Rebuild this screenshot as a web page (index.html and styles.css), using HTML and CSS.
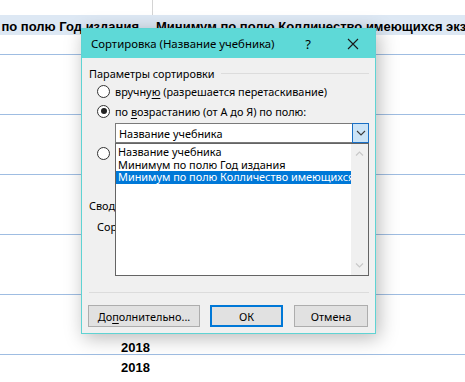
FILE: index.html
```html
<!DOCTYPE html>
<html>
<head>
<meta charset="utf-8">
<link rel="stylesheet" href="styles.css">
</head>
<body>
<div class="sheet">
  <div class="row r-top"><div class="cell c1"></div><div class="cell c2"></div></div>
  <div class="row r-head">
    <div class="cell c1 bold right">Минимум по полю Год издания</div>
    <div class="cell c2 bold">Минимум по полю Колличество имеющихся экземпляров</div>
  </div>
  <div class="row r-20 line"></div>
  <div class="row r-60 line"></div>
  <div class="row r-60 line"></div>
  <div class="row r-60 line"></div>
  <div class="row r-60 line"></div>
  <div class="row r-40"></div>
  <div class="row r-20 line"><div class="cell c1 bold right yr">2018</div></div>
  <div class="row r-20"><div class="cell c1 bold right yr">2018</div></div>
</div>

<div class="dialog">
  <div class="titlebar">
    <span class="title">Сортировка (Название учебника)</span>
    <span class="help">?</span>
    <svg class="close" width="12" height="12" viewBox="0 0 12 12"><path d="M1 1L11 11M11 1L1 11" stroke="#1a1a1a" stroke-width="1.1" fill="none"/></svg>
  </div>
  <div class="body">
    <div class="group">
      <span class="group-label">Параметры сортировки</span>
      <span class="group-line"></span>
    </div>
    <div class="opt"><span class="radio"></span><span>вручну<u>ю</u> (разрешается перетаскивание)</span></div>
    <div class="opt"><span class="radio on"></span><span>по <u>в</u>озрастанию (от А до Я) по полю:</span></div>
    <div class="combo">
      <span class="combo-text">Название учебника</span>
      <span class="combo-btn"><svg width="10" height="6" viewBox="0 0 10 6"><path d="M1 1L5 5L9 1" stroke="#3c3c3c" stroke-width="1.1" fill="none"/></svg></span>
      <div class="list">
        <div class="items">
          <div class="item">Название учебника</div>
          <div class="item">Минимум по полю Год издания</div>
          <div class="item sel">Минимум по полю Колличество имеющихся экземпляров</div>
        </div>
        <div class="scroll">
          <svg width="9" height="5" viewBox="0 0 9 5"><path d="M1 4.5L4.5 1L8 4.5" stroke="#c8c8c8" stroke-width="1.2" fill="none"/></svg>
          <svg width="9" height="5" viewBox="0 0 9 5"><path d="M1 0.5L4.5 4L8 0.5" stroke="#c8c8c8" stroke-width="1.2" fill="none"/></svg>
        </div>
      </div>
    </div>
    <div class="opt"><span class="radio"></span><span>по убыванию (от Я до А) по полю:</span></div>
    <div class="combo ghost"></div>
    <div class="summary">Сводка</div>
    <div class="summary2">Сортировка: Название учебника по возрастанию</div>
    <div class="sep"></div>
    <div class="buttons">
      <button class="btn wide">До<u>п</u>олнительно...</button>
      <button class="btn ok">ОК</button>
      <button class="btn">Отмена</button>
    </div>
  </div>
</div>
</body>
</html>
```

FILE: styles.css
```css
html, body {
  margin: 0;
  padding: 0;
  background: #ffffff;
  width: 465px;
  height: 382px;
  overflow: hidden;
}

.sheet {
  position: relative;
  width: 465px;
  font-family: "Liberation Sans", Arial, sans-serif;
  font-size: 13px;
  color: #000;
}

.row {
  display: flex;
  width: 465px;
  box-sizing: border-box;
}

.cell {
  box-sizing: border-box;
  white-space: nowrap;
  overflow: hidden;
}

.c1 {
  width: 153px;
  flex: none;
}

.c2 {
  flex: 1;
  padding-left: 3px;
}

.right {
  display: flex;
  justify-content: flex-end;
  padding-right: 13px;
}

.bold {
  font-weight: bold;
}

.r-top {
  height: 15px;
}

.r-top .c1 {
  border-right: 1px solid #d4d4d4;
}

.r-head {
  height: 20px;
  background: #dde8f4;
  line-height: 20px;
  padding-top: 2px;
}

.r-head .c1 {
  padding-right: 14px;
}

.r-20 {
  height: 20px;
}

.r-60 {
  height: 60px;
}

.r-40 {
  height: 40px;
}

.line {
  border-bottom: 1px solid #9fbde2;
}

.yr {
  line-height: 20px;
  padding-right: 3px;
  padding-top: 3px;
}

/* Dialog */
.dialog {
  position: absolute;
  left: 81px;
  top: 28px;
  width: 295px;
  height: 306px;
  box-sizing: border-box;
  border: 1px solid #5fd3d3;
  background: #f0f0f0;
  box-shadow: 3px 4px 18px rgba(0, 0, 0, 0.28);
  font-family: "Noto Sans", "Open Sans", sans-serif;
  font-size: 10.9px;
  color: #000;
}

.titlebar {
  height: 29px;
  background: #5ed9d7;
  display: flex;
  align-items: center;
  padding-left: 9px;
  padding-right: 16px;
  font-size: 11.4px;
}

.title {
  flex: 1;
}

.help {
  width: 12px;
  text-align: center;
  margin-right: 33px;
  font-size: 13px;
}

.close {
  display: block;
}

.body {
  padding: 7px 6px 0 7px;
  display: flex;
  flex-direction: column;
}

.group {
  display: flex;
  align-items: center;
  height: 16px;
}

.group-label {
  white-space: nowrap;
}

.group-line {
  flex: 1;
  height: 1px;
  background: #dcdcdc;
  margin-left: 6px;
}

.opt {
  display: flex;
  align-items: center;
  height: 20px;
  padding-left: 8px;
  white-space: nowrap;
}

.radio {
  width: 11px;
  height: 11px;
  border: 1px solid #333;
  border-radius: 50%;
  background: #fff;
  margin-right: 5px;
  position: relative;
  flex: none;
}

.radio.on::after {
  content: "";
  position: absolute;
  left: 2.5px;
  top: 2.5px;
  width: 6px;
  height: 6px;
  border-radius: 50%;
  background: #222;
}

u {
  text-decoration: underline;
  text-underline-offset: 2px;
}

.combo {
  position: relative;
  margin-left: 26px;
  margin-top: 2px;
  height: 20px;
  box-sizing: border-box;
  border: 1px solid #7a7a7a;
  background: #fff;
  display: flex;
  align-items: center;
  padding-left: 3px;
}

.combo.ghost {
  visibility: hidden;
}

.combo-text {
  flex: 1;
}

.combo-btn {
  width: 17px;
  height: 20px;
  margin-right: -1px;
  box-sizing: border-box;
  border: 1px solid #1a6fc4;
  background: #cce4f7;
  display: flex;
  align-items: center;
  justify-content: center;
}

.list {
  position: absolute;
  left: -1px;
  right: -1px;
  top: 19px;
  height: 133px;
  box-sizing: border-box;
  border: 1px solid #646464;
  background: #fff;
  display: flex;
  z-index: 2;
}

.items {
  flex: 1;
  overflow: hidden;
  padding-top: 2px;
}

.item {
  height: 12.5px;
  line-height: 12.5px;
  padding-left: 2px;
  white-space: nowrap;
  overflow: hidden;
}

.item.sel {
  background: #0078d7;
  color: #fff;
}

.scroll {
  width: 17px;
  background: #f0f0f0;
  display: flex;
  flex-direction: column;
  align-items: center;
  justify-content: space-between;
  padding: 7px 0 7px;
}

.summary {
  margin-top: 13px;
  height: 16px;
  line-height: 16px;
  white-space: nowrap;
}

.summary2 {
  margin-top: 5px;
  padding-left: 8px;
  height: 16px;
  line-height: 16px;
  white-space: nowrap;
  overflow: hidden;
}

.sep {
  margin-top: 57px;
  height: 1px;
  background: #dcdcdc;
}

.buttons {
  display: flex;
  margin-top: 12px;
  margin-left: -1px;
}

.btn {
  height: 22px;
  box-sizing: border-box;
  border: 1px solid #adadad;
  background: #e1e1e1;
  font-family: "Noto Sans", "Open Sans", sans-serif;
  font-size: 10.9px;
  color: #000;
  padding: 0;
  width: 74px;
}

.btn.wide {
  width: 112px;
}

.btn.ok {
  margin-left: 10px;
  width: 73px;
  border: 2px solid #0078d7;
}

.btn + .btn:last-child {
  margin-left: 11px;
}
```
